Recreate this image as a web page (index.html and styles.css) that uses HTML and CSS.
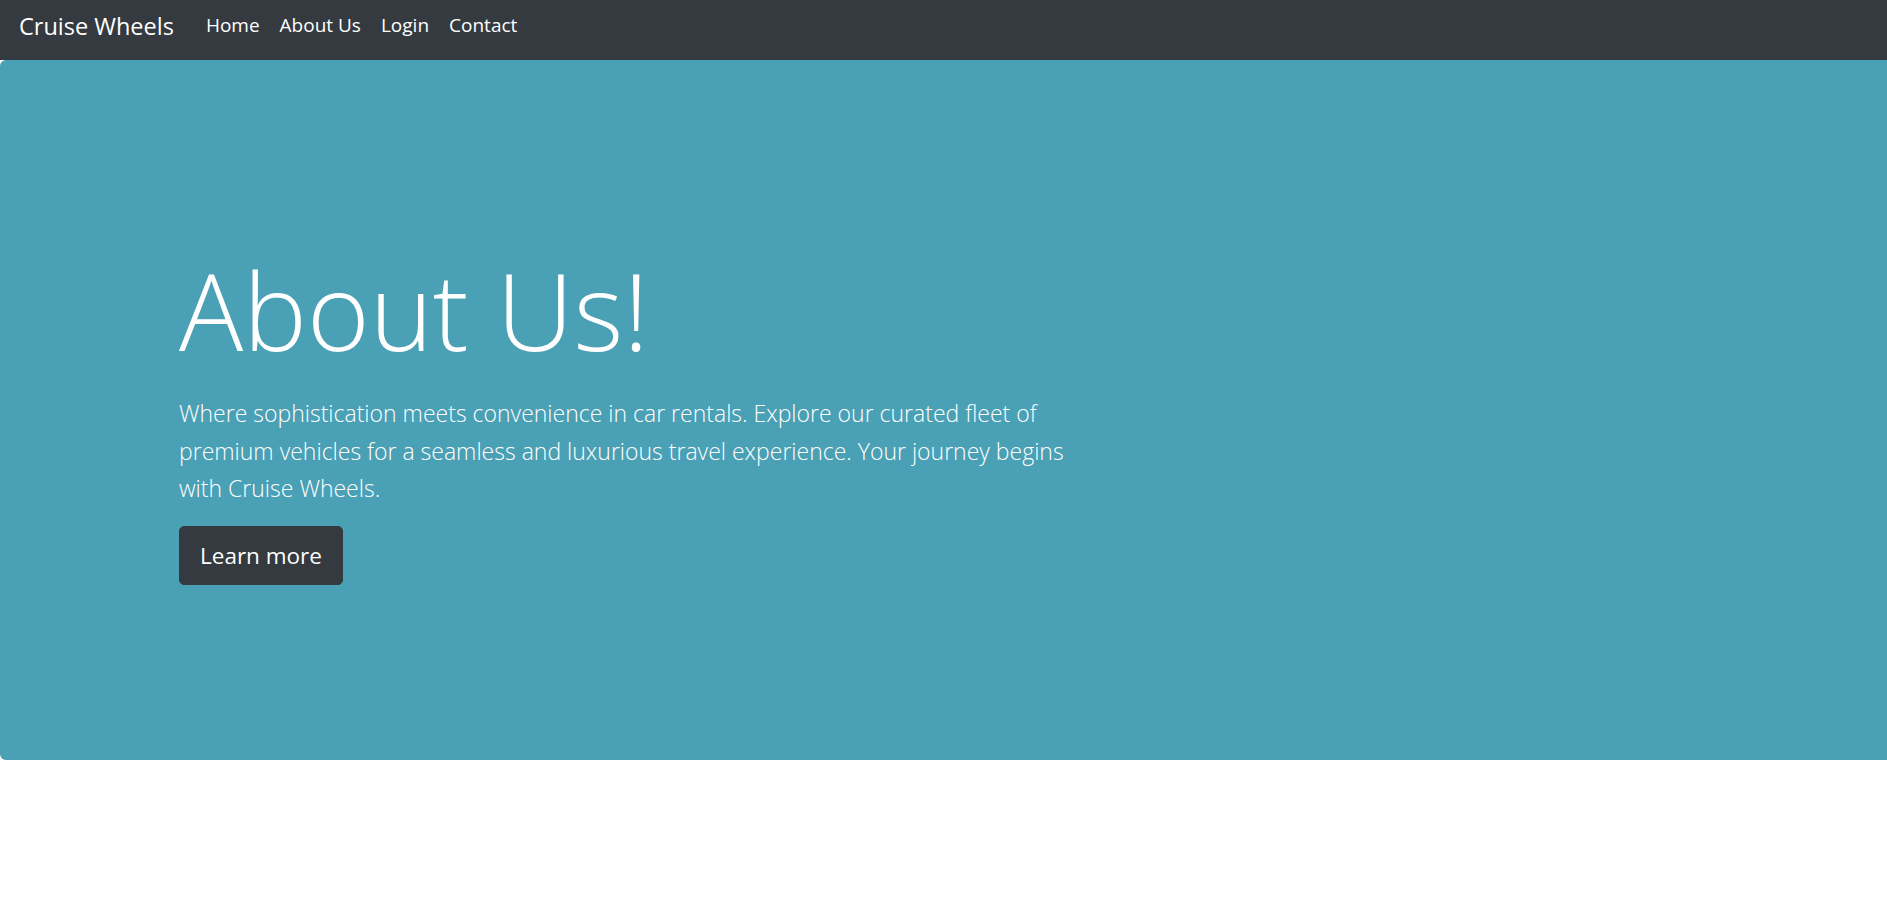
FILE: index.html
```html
<!DOCTYPE html>
<html lang="en">
<head>
<meta charset="utf-8">
<title>About Us - Cruise Wheels</title>
<link rel="stylesheet" href="styles.css">
</head>
<body>
<nav class="navbar">
  <a class="brand" href="#">Cruise Wheels</a>
  <ul class="nav">
    <li><a class="nav-link" href="#">Home</a></li>
    <li><a class="nav-link" href="#">About Us</a></li>
    <li><a class="nav-link" href="#">Login</a></li>
    <li><a class="nav-link" href="#">Contact</a></li>
  </ul>
</nav>
<div class="page">
  <section class="hero">
    <div class="hero-inner">
      <h1 class="hero-title">About Us!</h1>
      <p class="lead">Where sophistication meets convenience in car rentals. Explore our curated fleet of premium vehicles for a seamless and luxurious travel experience. Your journey begins with Cruise Wheels.</p>
      <a class="btn" href="#">Learn more</a>
    </div>
  </section>
</div>
</body>
</html>
```
FILE: styles.css
```css
html, body {
  margin: 0;
  padding: 0;
  background: #fff;
}
body {
  font-family: "Open Sans", "Noto Sans", sans-serif;
  color: #212529;
}
.navbar {
  height: 60px;
  box-sizing: border-box;
  background: #343a40;
  display: flex;
  align-items: center;
  padding: 0 19px 9px;
}
.brand {
  color: #fff;
  text-decoration: none;
  font-size: 23.5px;
  line-height: 1;
  margin-right: 22px;
  position: relative;
  top: 1px;
}
.nav {
  list-style: none;
  display: flex;
  margin: 0;
  padding: 0;
}
.nav-link {
  display: block;
  color: #fff;
  text-decoration: none;
  font-size: 19px;
  padding: 0 10px;
  line-height: 1;
}
.page {
  overflow: hidden;
}
.hero {
  background: #4aa0b5;
  height: 700px;
  box-sizing: border-box;
  padding-top: 183px;
  margin-right: -12px;
  border-radius: 6px;
}
.hero-inner {
  padding-left: 179px;
}
.hero-title {
  font-size: 107px;
  font-weight: 300;
  line-height: 1.2;
  color: #fff;
  margin: 0 0 21px;
  padding-top: 3px;
}
.lead {
  font-size: 23px;
  font-weight: 300;
  line-height: 37.5px;
  color: #fff;
  max-width: 900px;
  margin: 0 0 18px;
}
.btn {
  display: inline-block;
  background: #343a40;
  color: #fff;
  text-decoration: none;
  font-size: 22.5px;
  line-height: 37.5px;
  padding: 10px 20px;
  border: 1px solid #343a40;
  border-radius: 5px;
}
```
